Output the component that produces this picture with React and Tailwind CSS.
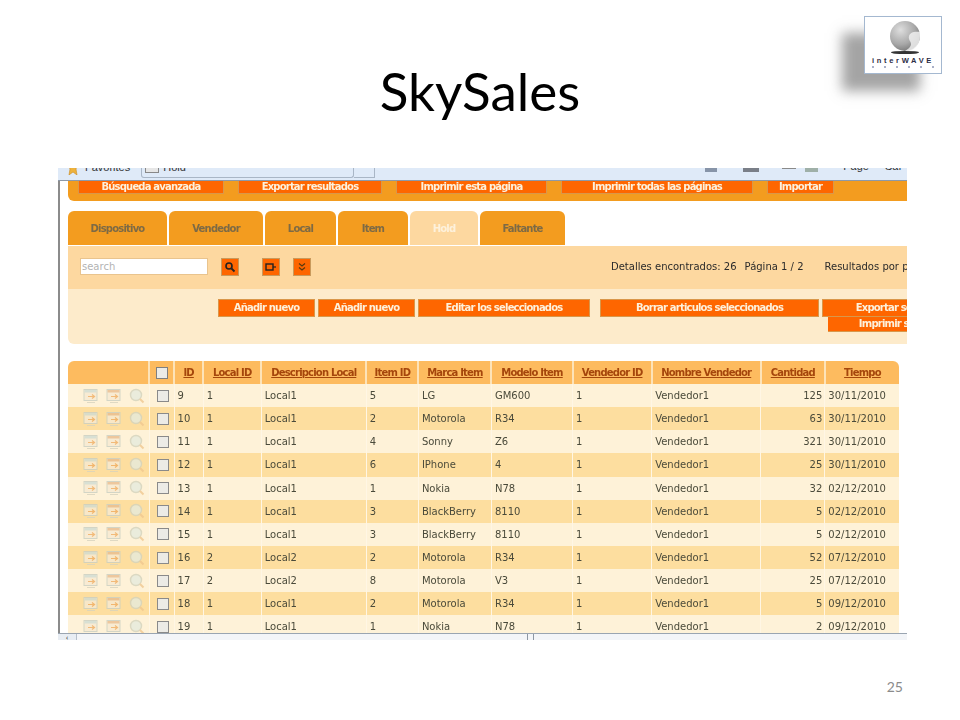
import React from 'react'

const rows = [
  [9, 1, 'Local1', 5, 'LG', 'GM600', 125, '30/11/2010'],
  [10, 1, 'Local1', 2, 'Motorola', 'R34', 63, '30/11/2010'],
  [11, 1, 'Local1', 4, 'Sonny', 'Z6', 321, '30/11/2010'],
  [12, 1, 'Local1', 6, 'IPhone', '4', 25, '30/11/2010'],
  [13, 1, 'Local1', 1, 'Nokia', 'N78', 32, '02/12/2010'],
  [14, 1, 'Local1', 3, 'BlackBerry', '8110', 5, '02/12/2010'],
  [15, 1, 'Local1', 3, 'BlackBerry', '8110', 5, '02/12/2010'],
  [16, 2, 'Local2', 2, 'Motorola', 'R34', 52, '07/12/2010'],
  [17, 2, 'Local2', 8, 'Motorola', 'V3', 25, '07/12/2010'],
  [18, 1, 'Local1', 2, 'Motorola', 'R34', 5, '09/12/2010'],
  [19, 1, 'Local1', 1, 'Nokia', 'N78', 2, '09/12/2010'],
]

const cols = [
  ['ID', 'w-[29px]'],
  ['Local ID', 'w-[58px]'],
  ['Descripcion Local', 'w-[105px]'],
  ['Item ID', 'w-[52px]'],
  ['Marca Item', 'w-[73px]'],
  ['Modelo Item', 'w-[81px]'],
  ['Vendedor ID', 'w-[79px]'],
  ['Nombre Vendedor', 'w-[109px]'],
  ['Cantidad', 'w-[64px]'],
  ['Tiempo', 'w-[74px]'],
]

const Btn = ({ className, children }) => (
  <div className={'shrink-0 bg-[#fe6600] border border-[#d9974a] text-[#fdf1dc] font-bold text-center whitespace-nowrap overflow-hidden text-[10px] tracking-[-0.8px] font-["DejaVu_Sans",sans-serif] ' + className}>
    {children}
  </div>
)

const Tab = ({ className, active, children }) => (
  <div className={'h-[34px] rounded-t-[6px] flex items-center justify-center text-[10px] tracking-[-0.8px] font-bold font-["DejaVu_Sans",sans-serif] ' + (active ? 'bg-[#fdd8a0] text-[#fdf1dc] ' : 'bg-[#f39c1f] text-[#7d6a45] ') + className}>
    {children}
  </div>
)

const SquareBtn = ({ className, children }) => (
  <div className={'shrink-0 w-[18px] h-[18px] bg-[#fe6600] border border-[#c99a5c] flex items-center justify-center ' + className}>
    {children}
  </div>
)

const RowIcon = ({ kind }) => {
  if (kind === 'search') {
    return (
      <svg className="opacity-80" width="16" height="16" viewBox="0 0 16 16" fill="none">
        <circle cx="7" cy="7" r="5.5" fill="#e6ebdd" stroke="#d3d3bd" strokeWidth="1.4" />
        <path d="M11 11l3.5 3.5" stroke="#f0c890" strokeWidth="2" />
      </svg>
    )
  }
  return (
    <svg className="opacity-80" width="16" height="16" viewBox="0 0 16 16" fill="none">
      <rect x="1" y="1.5" width="13" height="11" fill="#f7ead2" stroke="#c9cfc2" />
      <rect x="1.5" y="2" width="12" height="2.5" fill={kind === 'edit' ? '#cfdcd4' : '#e9bd8f'} />
      <path d="M5 8.5h6M9 6.5l2.5 2-2.5 2" stroke="#f0ad62" strokeWidth="1.2" />
      <path d="M4 14.5h8" stroke="#d8d3be" />
    </svg>
  )
}

const Logo = () => (
  <div className="absolute left-[864px] top-[16px] w-[78px] h-[58px] bg-white border border-[#a4b8d0] shadow-[-22px_17px_12px_rgba(90,90,90,0.55)] flex flex-col items-center pt-[4px]">
    <svg className="ml-[4px]" width="36" height="35" viewBox="0 0 36 35">
      <defs>
        <radialGradient id="globe" cx="0.35" cy="0.3" r="0.8">
          <stop offset="0" stopColor="#dedede" />
          <stop offset="0.6" stopColor="#a8a8a8" />
          <stop offset="1" stopColor="#6e6e6e" />
        </radialGradient>
      </defs>
      <circle cx="18" cy="15" r="15" fill="url(#globe)" />
      <path d="M33 11c-5-1-10 0-11 4s2 5 2 8-3 5-6 7c9 1 15-6 15-15z" fill="#efefef" opacity="0.85" />
      <ellipse cx="18" cy="31.5" rx="14" ry="1.6" fill="#333333" />
    </svg>
    <div className='text-[7.5px] leading-[9px] font-bold tracking-[2.7px] text-[#2c2c44] font-["Liberation_Sans",sans-serif] whitespace-nowrap'>
      interWAVE
    </div>
    <div className="flex gap-[10px] mt-px">
      <span className="w-[2px] h-[2px] bg-[#a9b0c8]" />
      <span className="w-[2px] h-[2px] bg-[#a9b0c8]" />
      <span className="w-[2px] h-[2px] bg-[#a9b0c8]" />
      <span className="w-[2px] h-[2px] bg-[#a9b0c8]" />
      <span className="w-[2px] h-[2px] bg-[#a9b0c8]" />
      <span className="w-[2px] h-[2px] bg-[#a9b0c8]" />
    </div>
  </div>
)

const Toolbar = () => (
  <div className='h-[13px] shrink-0 bg-[#dfeaf8] border-b border-[#8d99a8] flex items-end overflow-hidden text-[11px] leading-[14px] text-[#333] font-["Liberation_Sans",sans-serif]'>
    <svg className="ml-[8px] mb-[5px]" width="13" height="12" viewBox="0 0 13 12"><path d="M1 0h11l-2 6 1 6-4-3-4 3 1-6z" fill="#eeb23c" stroke="#c98a20" strokeWidth="0.6" /></svg>
    <span className="ml-[6px] mb-[6px]">Favorites</span>
    <div className="ml-[11px] w-[213px] h-[20px] mb-[2px] self-end border-l border-r border-b border-[#a9b6c6] rounded-b-[3px] pl-[3px] flex items-end">
      <span className="w-[14px] h-[7px] mb-[4px] bg-[#e6e6e6] border border-[#888]" />
      <span className="ml-[4px] mb-[3px]">Hold</span>
    </div>
    <div className="w-[21px] h-[20px] mb-[2px] border-r border-b border-[#a9b6c6]" />
    <div className="ml-[330px] mb-[8px] w-[12px] h-[4px] bg-[#8794a8]" />
    <div className="ml-[26px] mb-[8px] w-[16px] h-[4px] bg-[#7a7f88]" />
    <div className="ml-[23px] mb-[11px] w-[14px] h-[1px] bg-[#8a8a8a]" />
    <div className="ml-[9px] mb-[8px] w-[13px] h-[4px] bg-[#9fb0a8]" />
    <span className="ml-[25px] mb-[7px]">Page</span>
    <span className="ml-[16px] mb-[7px]">Saf</span>
  </div>
)

const App = () => {
  return (
    <div className="relative w-[960px] h-[720px] bg-white overflow-hidden flex flex-col">
      <Logo />
      <h1 className='h-[163px] shrink-0 pt-[58px] text-center text-[53px] leading-[66px] text-black font-["Lato",sans-serif]'>
        SkySales
      </h1>

      <div className="ml-[58px] w-[849px] h-[477px] shrink-0 flex flex-col overflow-hidden pt-[5px] blur-[0.35px]">
        <Toolbar />

        <div className="flex-1 min-h-0 border-l-2 border-[#8b8b8b] pl-[8px] overflow-hidden">
          <div className="w-[839px]">
            <div className="h-[20px] bg-[#f39c1f] rounded-bl-[6px] flex gap-[14px] pl-[10px] items-start">
              <Btn className="w-[146px] h-[13px] border-t-0 leading-[11px]">Búsqueda avanzada</Btn>
              <Btn className="w-[144px] h-[13px] border-t-0 leading-[11px]">Exportar resultados</Btn>
              <Btn className="w-[151px] h-[13px] border-t-0 leading-[11px]">Imprimir esta página</Btn>
              <Btn className="w-[192px] h-[13px] border-t-0 leading-[11px]">Imprimir todas las páginas</Btn>
              <Btn className="w-[67px] h-[13px] border-t-0 leading-[11px]">Importar</Btn>
            </div>

            <div className="flex gap-[2px] mt-[10px]">
              <Tab className="w-[99px]">Dispositivo</Tab>
              <Tab className="w-[94px]">Vendedor</Tab>
              <Tab className="w-[71px]">Local</Tab>
              <Tab className="w-[70px]">Item</Tab>
              <Tab className="w-[68px]" active>Hold</Tab>
              <Tab className="w-[85px]">Faltante</Tab>
            </div>

            <div className="h-[43px] mt-px bg-[#fdd8a0] flex items-center pl-[12px] pb-[2px] whitespace-nowrap overflow-hidden font-['DejaVu_Sans',sans-serif]">
              <div className="shrink-0 w-[128px] h-[17px] bg-white border border-[#e9c48e] text-[10px] leading-[15px] pl-px text-[#b3b3b3]">search</div>
              <SquareBtn className="ml-[13px]">
                <svg width="12" height="12" viewBox="0 0 12 12" fill="none"><circle cx="5" cy="5" r="3" stroke="#222" strokeWidth="1.6" /><path d="M7.5 7.5l3 3" stroke="#222" strokeWidth="1.8" /></svg>
              </SquareBtn>
              <SquareBtn className="ml-[23px]">
                <svg width="12" height="12" viewBox="0 0 12 12"><rect x="1" y="3" width="7" height="6" fill="#fe6600" stroke="#222" strokeWidth="1.4" /><path d="M8 6h3" stroke="#222" strokeWidth="1.2" /></svg>
              </SquareBtn>
              <SquareBtn className="ml-[13px]">
                <svg width="12" height="12" viewBox="0 0 12 12" fill="none"><path d="M3 2.5l3 2.5 3-2.5M3 6.5L6 9l3-2.5" stroke="#5a3a10" strokeWidth="1.2" /></svg>
              </SquareBtn>
              <span className="ml-[300px] shrink-0 text-[10px] text-[#2b2b2b]">Detalles encontrados: 26</span>
              <span className="ml-[8px] shrink-0 text-[10px] text-[#2b2b2b]">Página 1 / 2</span>
              <span className="ml-[21px] shrink-0 text-[10px] text-[#2b2b2b]">Resultados por página</span>
            </div>

            <div className="h-[55px] bg-[#fdebcb] rounded-bl-[6px] pt-[10px] pl-[150px] overflow-hidden">
              <div className="flex w-[900px]">
                <Btn className="w-[97px] h-[18px] leading-[16px]">Añadir nuevo</Btn>
                <Btn className="w-[97px] h-[18px] leading-[16px] ml-[3px]">Añadir nuevo</Btn>
                <Btn className="w-[172px] h-[18px] leading-[16px] ml-[3px]">Editar los seleccionados</Btn>
                <Btn className="w-[219px] h-[18px] leading-[16px] ml-[10px]">Borrar articulos seleccionados</Btn>
                <Btn className="w-[181px] h-[18px] leading-[16px] ml-[3px]">Exportar seleccionados</Btn>
              </div>
              <div className="flex w-[900px] pl-[610px]">
                <Btn className="w-[175px] h-[15px] leading-[13px] border-t-0 border-l-0 border-r-0">Imprimir seleccionados</Btn>
              </div>
            </div>

            <table className="mt-[17px] w-[831px] table-fixed border-collapse text-[10px] font-['DejaVu_Sans',sans-serif] text-[#4a4a3a]">
              <thead>
                <tr className="h-[23px] bg-[#fdbb5f] text-[#a5460c] text-[10px] tracking-[-0.8px]">
                  <th className="w-[81px] rounded-tl-[6px] border-r-2 border-[#fde3b8]" />
                  <th className="w-[25px] border-r-2 border-[#fde3b8]">
                    <span className="block mx-auto w-[12px] h-[12px] bg-[#ecebe6] border border-[#7f7f7f]" />
                  </th>
                  {cols.map(([name, w], i) => (
                    <th key={name} className={w + ' font-bold p-0 text-center whitespace-nowrap ' + (i === cols.length - 1 ? 'rounded-tr-[6px]' : 'border-r-2 border-[#fde3b8]')}>
                      <span className="underline">{name}</span>
                    </th>
                  ))}
                </tr>
              </thead>
              <tbody>
                {rows.map((r, i) => (
                  <tr key={r[0]} className={'h-[23.15px] ' + (i % 2 === 0 ? 'bg-[#fef2d8]' : 'bg-[#fdde9f]')}>
                    <td className="border-r border-[#fff6e4]">
                      <div className="flex items-center gap-[7px] pl-[15px]">
                        <RowIcon kind="edit" />
                        <RowIcon kind="sheet" />
                        <RowIcon kind="search" />
                      </div>
                    </td>
                    <td className="border-r border-[#fff6e4]">
                      <span className="block ml-[7px] w-[12px] h-[12px] bg-[#ecebe6] border border-[#8a8a8a]" />
                    </td>
                    <td className="pl-[3px] border-r border-[#fff6e4]">{r[0]}</td>
                    <td className="pl-[3px] border-r border-[#fff6e4]">{r[1]}</td>
                    <td className="pl-[3px] border-r border-[#fff6e4]">{r[2]}</td>
                    <td className="pl-[3px] border-r border-[#fff6e4]">{r[3]}</td>
                    <td className="pl-[3px] border-r border-[#fff6e4]">{r[4]}</td>
                    <td className="pl-[3px] border-r border-[#fff6e4]">{r[5]}</td>
                    <td className="pl-[3px] border-r border-[#fff6e4]">1</td>
                    <td className="pl-[3px] border-r border-[#fff6e4]">Vendedor1</td>
                    <td className="pr-[2px] text-right border-r border-[#fff6e4]">{r[6]}</td>
                    <td className="pl-[3px]">{r[7]}</td>
                  </tr>
                ))}
              </tbody>
            </table>
          </div>
        </div>

        <div className="h-[7px] shrink-0 bg-[#e8edf3] border-t border-[#9aa5b1] flex items-start">
          <div className="w-[18px] h-full text-center text-[7px] leading-[7px] text-[#333]">‹</div>
          <div className="flex-1 h-full bg-[#f3f5f8] border-l border-[#b6bfca] relative">
            <div className="absolute left-[450px] top-0 h-full w-[7px] border-x border-[#8d97a3]" />
          </div>
        </div>
      </div>

      <div className='h-[80px] pt-[38px] pr-[57px] text-right text-[14px] leading-[18px] text-[#8b8b8b] font-["Lato",sans-serif]'>25</div>
    </div>
  )
}

export default App
